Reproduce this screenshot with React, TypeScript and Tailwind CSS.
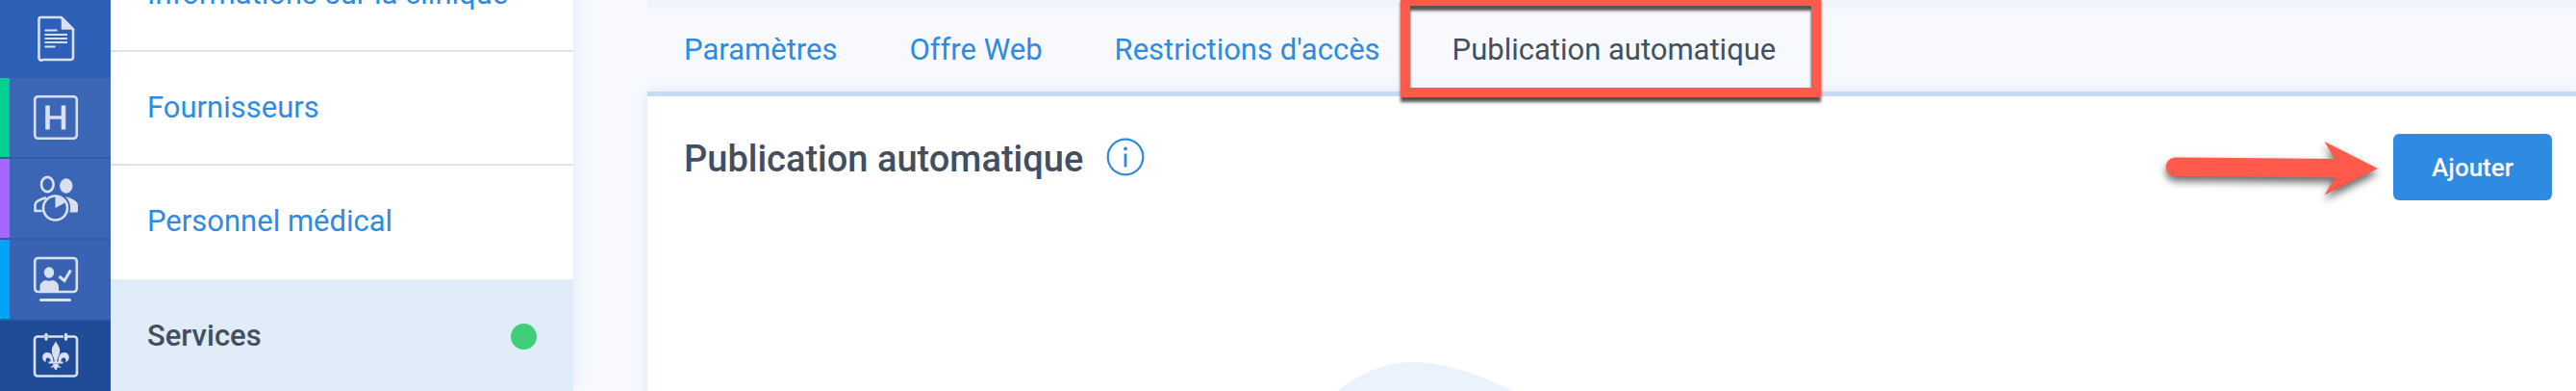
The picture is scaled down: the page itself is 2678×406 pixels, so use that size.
import type { ReactNode } from 'react';

const DocumentIcon = () => (
  <svg viewBox="0 0 48 48" className="size-12" fill="none" stroke="currentColor" strokeWidth="2.6">
    <path d="M8.500 2h21L42 14.500v29a2.500 2.500 0 0 1-2.500 2.500h-29A2.500 2.500 0 0 1 6.500 43.500V4A2 2 0 0 1 8.500 2z" strokeLinejoin="round" />
    <path d="M30.500 2v12H42z" fill="currentColor" strokeLinejoin="round" strokeWidth="1.500" />
    <path d="M12.500 15.500h13M12.500 20h23.500M12.500 24h23.500M12.500 28h23.500M12.500 32.500h11" strokeWidth="1.800" />
  </svg>
);

const HospitalIcon = () => (
  <svg viewBox="0 0 48 48" className="size-12" fill="none" stroke="currentColor">
    <rect x="2.200" y="2.200" width="43.600" height="43.600" rx="3.500" strokeWidth="2.600" />
    <path d="M15.500 11.500v25M32 11.500v25" strokeWidth="4.600" />
    <path d="M15.500 24H32" strokeWidth="3.400" />
  </svg>
);

const PatientsIcon = () => (
  <svg viewBox="0 0 48 48" className="size-12" fill="none" stroke="currentColor" strokeWidth="2.600">
    <ellipse cx="15.300" cy="9.500" rx="6.300" ry="7.600" />
    <ellipse cx="34.800" cy="11" rx="6.300" ry="7.300" fill="currentColor" strokeWidth="0.800" />
    <path d="M13 23.500c-5 1.500-10.500 4-10.500 7v6.500h6" strokeLinecap="round" strokeLinejoin="round" />
    <path d="M34 22c6 2 13 4.500 13 9v6a1.500 1.500 0 0 1-1.500 1.500h-7c1.500-6 0-12-4.500-16.500z" fill="currentColor" stroke="none" />
    <circle cx="23.500" cy="34" r="12.500" />
    <path d="M23.500 34V22.500c4.500 0 8 2 10 6z" fill="currentColor" stroke="none" />
  </svg>
);

const KioskIcon = () => (
  <svg viewBox="0 0 48 48" className="size-12" fill="none" stroke="currentColor" strokeWidth="2.600" strokeLinecap="round">
    <rect x="2.200" y="2" width="43.600" height="35" rx="3.500" />
    <path d="M8.500 45.500h30" strokeWidth="3" />
    <ellipse cx="17" cy="17" rx="5.200" ry="5.800" fill="currentColor" stroke="none" />
    <path d="M7.500 37v-5c0-4 3-6.500 6-7 2 1 5 1 7 0 3.500 .500 6.500 3 6.500 7v5z" fill="currentColor" stroke="none" />
    <path d="M27.500 21l5.500 4.500L39.500 14.500" strokeWidth="3" strokeLinecap="butt" />
  </svg>
);

const QuebecIcon = () => (
  <svg viewBox="0 0 48 48" className="size-12" fill="none" stroke="currentColor" strokeWidth="2.600">
    <path d="M12 4.500H5A3 3 0 0 0 2 7.500v35a3 3 0 0 0 3 3h38a3 3 0 0 0 3-3v-35a3 3 0 0 0-3-3h-7M16 4.500h16" />
    <path d="M14 2.500v4.500M34.500 2.500v4.500" strokeWidth="3.400" strokeLinecap="round" />
    <g fill="currentColor" stroke="none">
      <path d="M24 9.500c-1.500 3-4.200 5.500-4.200 9.500 0 5 2.700 7 3 12h2.400c.300-5 3-7 3-12 0-4-2.700-6.500-4.200-9.500z" />
      <path d="M21.500 31c0-5-1.500-10-6.300-10-3 0-5 2-5 5 0 2.300 1.300 4.500 3.500 5-.700-3 .600-5 2.600-4.400 2 .600 2.500 2.600 2.200 4.400z" />
      <path d="M26.500 31c0-5 1.500-10 6.300-10 3 0 5 2 5 5 0 2.300-1.300 4.500-3.500 5 .700-3-.600-5-2.600-4.400-2 .600-2.500 2.600-2.200 4.400z" />
      <path d="M16.500 30.500h15v2h-15z" />
      <path d="M21.500 32.500c0 2-1.500 3.500-3.500 3.500 1.300 1 3 .900 4-.200 0 1.500 1 2.700 2 3.700 1-1 2-2.200 2-3.700 1 1.100 2.700 1.200 4 .200-2 0-3.500-1.500-3.500-3.500z" />
    </g>
  </svg>
);

const InfoIcon = () => (
  <svg viewBox="0 0 40 40" className="size-10" fill="none" stroke="currentColor" strokeWidth="2.200">
    <circle cx="20" cy="20" r="18.300" />
    <path d="M20 16.500v14" strokeWidth="2.800" />
    <circle cx="20" cy="11.500" r="1.900" fill="currentColor" stroke="none" />
  </svg>
);

type RailItem = { label: string; icon: ReactNode; cell: string; bar: string };

const railItems: RailItem[] = [
  { label: 'Documents', icon: <DocumentIcon />, cell: 'h-[84px] bg-[#2f60b8] pt-0.5', bar: '' },
  { label: 'Clinique', icon: <HospitalIcon />, cell: 'h-[84px] bg-[#3c67b7] border-b-2 border-[#305cae]', bar: 'bg-[#00cf91]' },
  { label: 'Patients', icon: <PatientsIcon />, cell: 'h-[84px] bg-[#3b65b5] border-b-2 border-[#305cae]', bar: 'bg-[#a566fb]' },
  { label: 'Accueil', icon: <KioskIcon />, cell: 'h-[84px] bg-[#3963b2] border-b-2 border-[#305cae]', bar: 'bg-[#00a3f5]' },
  { label: 'Québec', icon: <QuebecIcon />, cell: 'h-[72px] bg-[#204b96]', bar: '' },
];

const sections = ['Informations sur la clinique', 'Fournisseurs', 'Personnel médical', 'Services'];

const tabs = ['Paramètres', 'Offre Web', "Restrictions d'accès", 'Publication automatique'];

export default function App() {
  return (
    <div className="flex h-screen overflow-hidden bg-[#f7f9fd] font-['Roboto',sans-serif] text-[31px] leading-10 text-[#434e60]">
      {/* Icon rail */}
      <nav className="z-20 -mt-[3px] flex w-[115px] shrink-0 flex-col bg-[#204b96] text-[#d9e1f1]">
        {railItems.map((item) => (
          <a key={item.label} href="#" aria-label={item.label} className={`flex shrink-0 items-center justify-between ${item.cell}`}>
            <span className={`w-2.5 self-stretch ${item.bar}`} />
            {item.icon}
            <span className="w-2.5" />
          </a>
        ))}
      </nav>

      {/* Section menu, scrolled part of the way down */}
      <nav className="z-10 -mt-16 w-[481px] shrink-0 bg-white shadow-[0_0_18px_#dfe8fb]">
        {sections.map((name) =>
          name === 'Services' ? (
            <a key={name} href="#" aria-current="page" className="flex h-[118px] items-center justify-between bg-[#e0ecf8] px-[38px] font-medium">
              {name}
              <span className="size-[27px] rounded-full bg-[#40cf78]" />
            </a>
          ) : (
            <a key={name} href="#" className="flex h-[118px] items-center border-b-2 border-[#dae4f7] px-[38px] text-[#2f8ae2] nth-3:border-white">
              {name}
            </a>
          ),
        )}
      </nav>

      <main className="ml-[77px] flex min-w-0 flex-1 flex-col">
        {/* Tabs */}
        <div className="flex h-[95px] shrink-0 items-start gap-[75px] bg-linear-to-b from-[#eff3fc] to-[#f7f9fd] to-15% pt-8 pl-[38px]">
          {tabs.map((tab) =>
            tab === 'Publication automatique' ? (
              <a key={tab} href="#" aria-current="page" className="relative whitespace-nowrap">
                {tab}
                <span className="absolute -top-9 -right-[47px] -bottom-[29px] -left-[54px] z-10 border-10 border-[#ff5a4b] shadow-[0_5px_3px_#555,inset_0_5px_3px_#555]" />
              </a>
            ) : (
              <a key={tab} href="#" className="whitespace-nowrap text-[#2f8ae2]">
                {tab}
              </a>
            ),
          )}
        </div>

        <section className="flex flex-1 flex-col border-t-[5px] border-[#c4dcf7] bg-white shadow-[0_0_14px_#dfe8fb]">
          <div className="flex items-start pt-[39px] pr-[25px] pl-[38px]">
            <h1 className="text-[38px] leading-[52px] font-medium">{tabs[3]}</h1>
            <button type="button" aria-label="Information" className="mt-1 ml-6 text-[#2f8ae2]">
              <InfoIcon />
            </button>
            <div className="ml-auto flex items-start">
              <svg viewBox="0 0 240 80" className="mt-2 h-20 w-60 overflow-visible drop-shadow-[0_5px_4px_#0009]">
                <path d="M12.500 16.500 179 18 168.500 0 224 28 168.500 55.500 179.500 37.500 12.500 36a9.800 9.800 0 0 1 0-19.500z" fill="#ff5a4b" />
              </svg>
              <button type="button" className="h-[69px] w-[165px] rounded-md bg-[#2f8be2] text-[26px] font-medium text-white">
                Ajouter
              </button>
            </div>
          </div>

          {/* Empty state illustration */}
          <svg viewBox="0 0 640 400" className="mx-auto mt-[149px] h-[400px] w-[640px] shrink-0">
            <path d="M4 60C30 30 66 0 112 0c38 0 76 15 124 40 120 60 300 80 380 230v130H0V72z" fill="#eaf2fc" />
          </svg>
        </section>
      </main>
    </div>
  );
}
